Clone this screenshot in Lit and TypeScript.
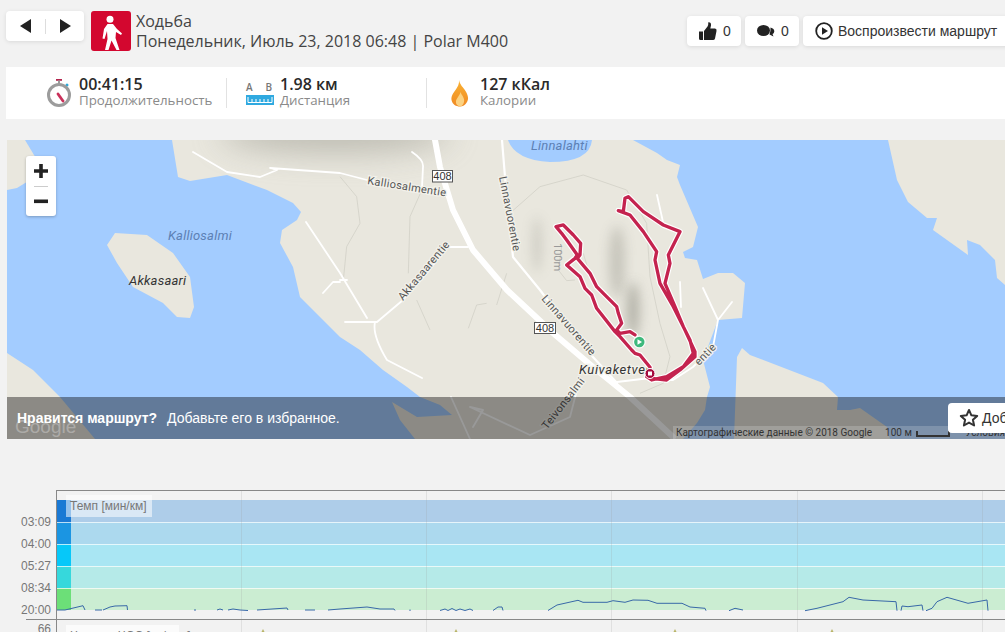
import { LitElement, html, css, svg } from "lit";
import { customElement } from "lit/decorators.js";

// road polylines, page coordinates
const ROADS_MINOR = [
  "M193 152L227 172L260 177L277 170L270 168L340 173L367 180L437 192",
  "M412 152Q424 160 423 167L422 187",
  "M447 247L427 273L403 300L377 322L357 322L345 322",
  "M447 247L468 247",
  "M375 322Q372 335 387 360L422 378",
  "M306 222L340 273L367 318",
  "M340 282L333 282L323 293",
  "M340 280L347 280",
  "M580 378L570 417L530 435L470 407",
  "M483 410L473 427",
  "M470 407L483 410",
  "M617 382L650 378",
  "M703 288L718 320L732 302",
  "M718 320L713 347L693 367L673 380L650 380",
  "M680 282L681 307",
  "M657 195L663 222",
  "M451 397L470 439",
];
const ROAD_LINNA = "M502 140L505 177L513 257L540 290L580 343L617 383";
const ROAD_HIGHWAY = "M435 140L440 167L453 210L473 250L507 290L553 333L593 367L630 397L673 437";

// contour lines, traced at 3x from x=340 y=130
const CONTOURS = [
  "M515 245L600 170L730 135L860 180L920 280L930 440L960 580L990 680L970 760L900 790",
  "M0 140L50 200L60 280L20 350L10 450",
  "M250 170L210 260L205 430",
  "M230 510L270 600",
  "M385 595L410 525L440 520",
  "M470 525L500 430",
  "M665 350L655 420L680 452L705 450",
  "M730 370L745 420",
];

// route, traced at 3x from x=520 y=180
const ROUTE = [
  "M390 562L360 525L345 520L335 510L300 470L285 455L230 385L215 345L195 325L180 290L140 255L165 235L172 225L140 180L125 160L108 140L130 135L160 165L182 190L180 225L172 235L210 280L230 320L250 340L290 380L295 400L305 430L290 450L300 460L330 455L345 465",
  "M395 595L440 600L480 570L525 530L525 515L490 440L465 380L435 310L450 250L445 225L480 155L430 135L370 95L325 50L315 55L310 95L295 92L330 105L370 155L410 215L405 240L420 310L460 380L510 480L520 520L490 560L440 590L395 600L380 590",
];

const PACE_SEGMENTS = [
  "57,610 65,610 83,605.7 85,610",
  "95,610 102,610",
  "103,610 110,607 115,606 127,605.7 127.5,610",
  "195,609 195,611",
  "217,610 220,609 223,610",
  "228,610 233,609 240,610 248,610.5",
  "257,610 287,608 288,610",
  "305,610 315,610",
  "328,610 340,609 367,607 380,609 394,609 395,610.5",
  "410,609.5 410,611",
  "440,610.5 445,609 448,610.5 452,608.5 456,610.5 460,609 465,610.5 470,609 473,610.5",
  "493,610.5 498,607 502,607 503,610.5",
  "548,610.5 557,605 578,600.3 583,602.3 607,602.3 613,600.7 625,602.3 633,600 648,600.3 657,603.3 682,603.3 690,607 705,608.3 706,610.7",
  "729,610.7 735,608.3 743,610",
  "805,610.7 817,608.3 843,601.7 849,597.3 863,600 896,601.7 897,610.7",
  "901,610.7 902,606 908,606.7 922,605 923,610.7",
  "926,610.7 932,608.3 937,601.7 947,597.3 968,603.3 987,600 988,610.7",
];

const ZONES = [
  { y: 500, strip: "#1a79d4", band: "#aecde9", label: "03:09" },
  { y: 522, strip: "#1b95e2", band: "#acd9ee", label: "04:00" },
  { y: 544, strip: "#06c8f9", band: "#a9e6f3", label: "05:27" },
  { y: 566, strip: "#36d8dc", band: "#b5eae8", label: "08:34" },
  { y: 588, strip: "#6cdf78", band: "#cbedd2", label: "20:00" },
];

const GRID_X = [241, 426, 611, 797, 982];
const MARKERS_X = [263, 456, 675, 832];

@customElement("app-root")
export class AppRoot extends LitElement {
  static styles = css`
    :host {
      display: block;
      height: 632px;
      overflow: hidden;
      background: #f2f2f2;
      font-family: "Open Sans", sans-serif;
      color: #333;
    }

    svg {
      flex-shrink: 0;
    }

    .header {
      display: flex;
      width: 1012px;
      padding: 11px 0 0 6px;
      box-sizing: border-box;
      height: 52px;
    }

    .card {
      background: #fff;
      border-radius: 4px;
      box-shadow: 0 1px 4px rgba(0, 0, 0, 0.1);
    }

    .nav {
      display: flex;
      align-items: center;
      justify-content: center;
      gap: 14px;
      width: 78px;
      height: 30px;
    }

    .nav i {
      width: 1px;
      height: 15px;
      background: #ddd;
    }

    .sport {
      width: 40px;
      height: 40px;
      margin-left: 7px;
      border-radius: 3px;
      background: #d3072f;
      display: block;
    }

    .title {
      margin-left: 5px;
      font-size: 16px;
      line-height: 20px;
      color: #444;
      white-space: nowrap;
    }

    .actions {
      display: flex;
      gap: 4px;
      margin-left: auto;
      margin-top: 5px;
      font-family: "Liberation Sans", sans-serif;
      font-size: 14px;
    }

    .btn {
      display: flex;
      align-items: center;
      height: 30px;
      box-sizing: border-box;
      color: #333;
    }

    .btn.small {
      width: 54px;
      padding-left: 12px;
      gap: 6px;
    }

    .btn.play {
      width: 209px;
      padding-left: 12px;
      gap: 5px;
    }

    .stats {
      display: flex;
      align-items: center;
      height: 52px;
      margin: 15px 0 0 6px;
      background: #fff;
    }

    .stat {
      display: flex;
      align-items: center;
      height: 30px;
      box-sizing: border-box;
    }

    .stat.time {
      width: 221px;
      padding-left: 41px;
      gap: 8px;
      border-right: 1px solid #e2e2e2;
    }

    .stat.dist {
      width: 200px;
      padding-left: 19px;
      gap: 6px;
      border-right: 1px solid #e2e2e2;
    }

    .stat.cal {
      padding-left: 23px;
      gap: 10px;
    }

    .text {
      margin-bottom: 2px;
    }

    .value {
      font-size: 16px;
      line-height: 16px;
      font-weight: 600;
      color: #2a2a2a;
    }

    .label {
      font-size: 13.3px;
      line-height: 16px;
      color: #8a8a8a;
    }

    .ab {
      display: flex;
      flex-direction: column;
      gap: 2px;
      width: 28px;
    }

    .ab span {
      display: flex;
      justify-content: space-between;
      padding: 0 1px 0 0;
      font-size: 10px;
      line-height: 12px;
      font-weight: 600;
      color: #777;
    }

    .map {
      position: relative;
      height: 299px;
      margin: 21px 0 0 7px;
      overflow: hidden;
      background: #a3ccff;
    }

    .map > svg {
      display: block;
    }

    .zoom {
      position: absolute;
      left: 19px;
      top: 16px;
      width: 30px;
      height: 60px;
      background: #fff;
      border-radius: 3px;
      box-shadow: 0 1px 3px rgba(0, 0, 0, 0.25);
    }

    .zoom svg {
      display: block;
    }

    .banner {
      position: absolute;
      left: 0;
      right: 0;
      bottom: 0;
      height: 42px;
      display: flex;
      align-items: center;
      padding-left: 10px;
      background: rgba(0, 0, 0, 0.4);
      color: #fff;
      font-family: "Liberation Sans", sans-serif;
      font-size: 14px;
      white-space: nowrap;
    }

    .banner b {
      margin-right: 10px;
    }

    .fav {
      position: absolute;
      z-index: 1;
      left: 941px;
      top: 6px;
      display: flex;
      align-items: center;
      gap: 3px;
      width: 160px;
      height: 30px;
      padding-left: 11px;
      background: #fff;
      border-radius: 4px;
      color: #333;
    }

    .google {
      position: absolute;
      left: 8px;
      bottom: 1px;
      font-family: "Liberation Sans", sans-serif;
      font-size: 19px;
      line-height: 22px;
      color: rgba(255, 255, 255, 0.3);
    }

    .attribution {
      position: absolute;
      right: 0;
      bottom: 0;
      left: 666px;
      height: 13px;
      display: flex;
      align-items: center;
      padding-left: 3px;
      background: rgba(255, 255, 255, 0.18);
      font-family: "Roboto", sans-serif;
      font-size: 10px;
      color: #333;
      white-space: nowrap;
    }

    .attribution .dist {
      margin-left: 13px;
    }

    .attribution .scale {
      width: 41px;
      height: 4px;
      margin: 2px 0 0 4px;
      border: 2px solid #333;
      border-top: 0;
    }

    .attribution .terms {
      margin-left: 15px;
    }

    .chart {
      display: block;
      margin-top: 51px;
    }

    .chart text {
      font-family: "Liberation Sans", sans-serif;
      font-size: 12px;
    }
  `;

  private mapLabel(x: number, y: number, angle: number, text: string) {
    return svg`<text transform="translate(${x} ${y}) rotate(${angle})" font-family="Roboto, sans-serif"
      font-size="11" letter-spacing=".3" fill="#555" stroke="#f2f1ea" stroke-width="2.5" paint-order="stroke">${text}</text>`;
  }

  private renderMap() {
    return html`
      <svg width="998" height="299" viewBox="7 140 998 299">
        <defs>
          <filter id="b12" x="-100%" y="-200%" width="300%" height="500%"><feGaussianBlur stdDeviation="16" /></filter>
          <filter id="b4" x="-400%" y="-100%" width="900%" height="300%"><feGaussianBlur stdDeviation="6" /></filter>
          <clipPath id="main-land">
            <path d="M172 140L178 177L190 181L227 175L267 190L293 203L440 300L560 400L700 400L700 140Z" />
          </clipPath>
        </defs>
        <rect x="7" y="140" width="998" height="299" fill="#a3ccff" />
        <g fill="#e9e7de">
          <path d="M172 140L178 177L190 181L227 175L267 190L293 203L301 212L297 220L282 230L280 243L293 267L300 297L320 317L340 337L360 350L383 370L407 387L420 397L440 405L452 415L417 417L392 402L400 420L415 439L683 439L697 423L705 410L707 397L710 387L703 360L718 320L742 318L745 283L733 273L718 273L703 279L697 260L685 258L683 252L693 247L698 227L680 185L677 177L680 165L667 160L657 153L633 140L592 140Q590 162 550 162Q515 160 508 140Z" />
          <path d="M7 140H25L37 160L30 180L17 188L7 190Z" />
          <path d="M7 353L33 370L60 397L95 439H7Z" />
          <path d="M107 245L115 233L147 235L173 253L190 277L194 307L190 318L177 317L163 303L133 287L117 263Z" />
          <path d="M742 348L750 355L823 383L838 397L837 410L850 410L860 408L887 427L890 439H734L737 357Z" />
          <path d="M888 140L897 180L908 202L927 218L937 218L933 230L947 240L968 255L967 240L980 245L995 260L997 278L1005 285V140Z" />
        </g>
        <g fill="#9d9c92" clip-path="url(#main-land)">
          <ellipse cx="335" cy="132" rx="115" ry="20" opacity=".6" filter="url(#b12)" />
          <ellipse cx="537" cy="245" rx="4" ry="28" opacity=".4" filter="url(#b4)" />
          <ellipse cx="617" cy="262" rx="8" ry="36" opacity=".45" filter="url(#b4)" />
          <ellipse cx="633" cy="310" rx="6" ry="28" opacity=".75" filter="url(#b4)" />
        </g>
        <g transform="translate(340 130) scale(.3333)" fill="none" stroke="#d2d1c8" stroke-width="2.500">
          ${CONTOURS.map((d) => svg`<path d=${d} />`)}
        </g>
        <g fill="none" stroke="#fff" stroke-linejoin="round" stroke-linecap="round">
          <path d=${ROADS_MINOR.join("")} stroke-width="1.800" />
          <path d=${ROAD_LINNA} stroke-width="2.200" />
          <path d=${ROAD_HIGHWAY} stroke-width="6" />
        </g>
        <g font-family="Roboto, sans-serif" font-size="13" font-style="italic" letter-spacing=".2">
          <text x="168" y="240" fill="#5c80b4">Kalliosalmi</text>
          <text x="531" y="150" fill="#5c80b4">Linnalahti</text>
          <text x="129" y="285" fill="#333">Akkasaari</text>
          <text x="579" y="374" fill="#333" letter-spacing=".6" stroke="#f2f1ea" stroke-width="2.500" paint-order="stroke">Kuivaketvel</text>
        </g>
        ${this.mapLabel(367, 184, 9, "Kalliosalmentie")}
        ${this.mapLabel(403, 301, -50, "Akkasaarentie")}
        ${this.mapLabel(499, 177, 79, "Linnavuorentie")}
        ${this.mapLabel(541, 299, 49, "Linnavuorentie")}
        ${this.mapLabel(547, 430, -52, "Teivonsalmi")}
        ${this.mapLabel(699, 366, -46, "entie")}
        <text transform="translate(554 243) rotate(90)" font-family="Roboto, sans-serif" font-size="11" fill="#999">100m</text>
        <g font-family="Liberation Sans, sans-serif" font-size="11" fill="#333" text-anchor="middle">
          <rect x="432.500" y="170.500" width="20" height="11.500" fill="#fff" stroke="#555" />
          <text x="442.500" y="180">408</text>
          <rect x="534.500" y="322.500" width="21" height="11" fill="#fff" stroke="#555" />
          <text x="545" y="332">408</text>
        </g>
        <g transform="translate(520 180) scale(.3333)" fill="none" stroke-linejoin="round" stroke-linecap="round">
          ${ROUTE.map((d) => svg`<path d=${d} stroke="#fff" stroke-width="17" />`)}
          ${ROUTE.map((d) => svg`<path d=${d} stroke="#c4234f" stroke-width="10" />`)}
        </g>
        <circle cx="639.300" cy="342" r="6.500" fill="#fff" opacity=".8" />
        <circle cx="639.300" cy="342" r="5.200" fill="#3eb97c" />
        <path d="M637.500 339.300L642 342L637.500 344.700Z" fill="#fff" />
        <circle cx="650" cy="373.500" r="5" fill="#a50a3e" stroke="#fff" stroke-width="1" />
        <rect x="648" y="371.500" width="4" height="4" fill="#fff" />
      </svg>
      <div class="zoom">
        <svg width="30" height="60" viewBox="0 0 30 60">
          <path d="M13.200 8h3.600v5.200H22v3.600h-5.200V22h-3.600v-5.200H8v-3.600h5.200z" fill="#222" />
          <rect x="8" y="30" width="14" height="1" fill="#ccc" />
          <rect x="8" y="43.500" width="14" height="3.600" fill="#222" />
        </svg>
      </div>
      <div class="banner">
        <b>Нравится маршрут?</b>
        <span>Добавьте его в избранное.</span>
        <div class="fav">
          <svg width="20" height="20" viewBox="0 0 20 20">
            <path d="M10 2l2.400 5.300 5.800.6-4.300 3.900 1.200 5.700-5.100-2.900-5.100 2.900 1.200-5.700L1.800 7.900l5.800-.6z" fill="none" stroke="#333" stroke-width="2" stroke-linejoin="round" />
          </svg>
          <span>Добавить в избранное</span>
        </div>
      </div>
      <div class="google">Google</div>
      <div class="attribution">
        <span>Картографические данные © 2018 Google</span>
        <span class="dist">100 м</span>
        <span class="scale"></span>
        <span class="terms">Условия</span>
      </div>
    `;
  }

  private renderChart() {
    return html`
      <svg class="chart" width="1005" height="142" viewBox="0 490 1005 142">
        ${ZONES.map(
          (z) => svg`
            <rect x="57" y=${z.y} width="948" height="22" fill=${z.band} />
            <rect x="57" y=${z.y} width="14" height="22" fill=${z.strip} />
            <text x="51" y=${z.y + 26} text-anchor="end" fill="#777">${z.label}</text>
          `,
        )}
        ${ZONES.slice(1).map((z) => svg`<rect x="57" y=${z.y} width="948" height="1" fill="#fff" opacity=".7" />`)}
        ${GRID_X.map((x) => svg`<rect x=${x} y="490" width="1" height="142" fill="#999" opacity=".2" />`)}
        <rect x="56" y="490" width="949" height="1" fill="#888" />
        <rect x="56" y="490" width="1" height="142" fill="#888" />
        <rect x="26" y="619" width="979" height="1" fill="#888" />
        <rect x="66" y="495" width="86" height="22" fill="#fff" opacity=".55" />
        <text x="70" y="510" fill="#777">Темп [мин/км]</text>
        <g fill="none" stroke="#3868a8" stroke-width="1">
          ${PACE_SEGMENTS.map((p) => svg`<polyline points=${p} />`)}
        </g>
        <text x="51" y="633" text-anchor="end" fill="#777">66</text>
        <rect x="66" y="625" width="113" height="12" fill="#fff" opacity=".7" />
        <text x="70" y="640" fill="#777">Частота ЧСС [уд/мин]</text>
        ${MARKERS_X.map((x) => svg`<path d="M${x - 1.5} 632L${x} 629L${x + 1.5} 632Z" fill="#b9b56a" />`)}
      </svg>
    `;
  }

  render() {
    return html`
      <div class="header">
        <div class="nav card">
          <svg width="11" height="14" viewBox="0 0 11 14"><path d="M11 0V14L0 7Z" fill="#222" /></svg>
          <i></i>
          <svg width="11" height="14" viewBox="0 0 11 14"><path d="M0 0V14L11 7Z" fill="#222" /></svg>
        </div>
        <svg class="sport" viewBox="0 0 40 40">
          <circle cx="19" cy="8.300" r="3.500" fill="#fff" />
          <path d="M16.500 13H22L26 18L31 22.500L30 24L25 21L24.500 27L28.500 39H25.500L20.500 29.500L17.500 39H14L16.500 28L16 20L13.500 28L11.500 27.500L13 18Z" fill="#fff" />
        </svg>
        <div class="title">
          <div>Ходьба</div>
          <div>Понедельник, Июль 23, 2018 06:48 | Polar M400</div>
        </div>
        <div class="actions">
          <div class="btn small card">
            <svg width="18" height="18" viewBox="0 0 18 18">
              <path d="M0 9.500h4V18H1.500Q0 18 0 16.500zM5 9l3.500-4.500Q9.500 3 9.300 0.300Q12.300 0 12 3.500L11.300 6.500H16Q18 6.800 17.500 9L16 16.500Q15.600 18 14 18H5z" fill="#222" />
            </svg>
            <span>0</span>
          </div>
          <div class="btn small card">
            <svg width="18" height="18" viewBox="0 0 18 18">
              <ellipse cx="6.500" cy="8.500" rx="6.500" ry="5.500" fill="#222" />
              <path d="M13.500 5.500Q17.500 6.500 17.300 9.500Q17 11.500 15.500 12L16.500 14.500L12.500 12.500Q13.800 9 13.500 5.500Z" fill="#222" />
            </svg>
            <span>0</span>
          </div>
          <div class="btn play card">
            <svg width="18" height="18" viewBox="0 0 18 18">
              <circle cx="9" cy="9" r="7.800" fill="none" stroke="#222" stroke-width="1.800" />
              <path d="M7 5.200L13 9L7 12.800Z" fill="#222" />
            </svg>
            <span>Воспроизвести маршрут</span>
          </div>
        </div>
      </div>

      <div class="stats">
        <div class="stat time">
          <svg width="24" height="28" viewBox="0 0 24 28">
            <rect x="9" y="0" width="6" height="1.800" fill="#b3264e" />
            <rect x="11" y="1.500" width="2" height="4" fill="#9a9a9a" />
            <circle cx="20" cy="6" r="1.500" fill="#2fa9d8" />
            <circle cx="12" cy="16" r="10.500" fill="#fff" stroke="#9c9c9c" stroke-width="3" />
            <path d="M11 15L16 22" stroke="#c9305a" stroke-width="2.800" stroke-linecap="round" />
          </svg>
          <div class="text">
            <div class="value">00:41:15</div>
            <div class="label">Продолжительность</div>
          </div>
        </div>
        <div class="stat dist">
          <div class="ab">
            <span><span>A</span><span>B</span></span>
            <svg width="28" height="10" viewBox="0 0 28 10">
              <rect width="28" height="10" fill="#2fa9e0" />
              <path d="M2 2V7.500H26V2M6 4V7M10 4V7M14 4V7M18 4V7M22 4V7" fill="none" stroke="#fff" stroke-width="1" />
            </svg>
          </div>
          <div class="text">
            <div class="value">1.98 км</div>
            <div class="label">Дистанция</div>
          </div>
        </div>
        <div class="stat cal">
          <svg width="20" height="27" viewBox="0 0 20 27">
            <defs>
              <linearGradient id="flame" x1="0" y1="0" x2="0" y2="1">
                <stop offset="0" stop-color="#f9b233" />
                <stop offset="1" stop-color="#f08a24" />
              </linearGradient>
            </defs>
            <path d="M9 0C10 5 13 7 15.500 11C18 15 19 19 17 22C15.500 25 12.500 26.500 10 26.500C6 26.500 2.500 24.500 1.500 20C1 15.500 3.500 13 5.500 10C7.500 7 9.500 4 9 0Z" fill="url(#flame)" />
            <path d="M10.500 12C12 16 15 18 14 22C13.500 25 11 26.500 10 26.500C7.500 26 5.500 24 6 21C6.500 18 9.500 16 10.500 12Z" fill="#fcd281" />
          </svg>
          <div class="text">
            <div class="value">127 кКал</div>
            <div class="label">Калории</div>
          </div>
        </div>
      </div>

      <div class="map">${this.renderMap()}</div>
      ${this.renderChart()}
    `;
  }
}
